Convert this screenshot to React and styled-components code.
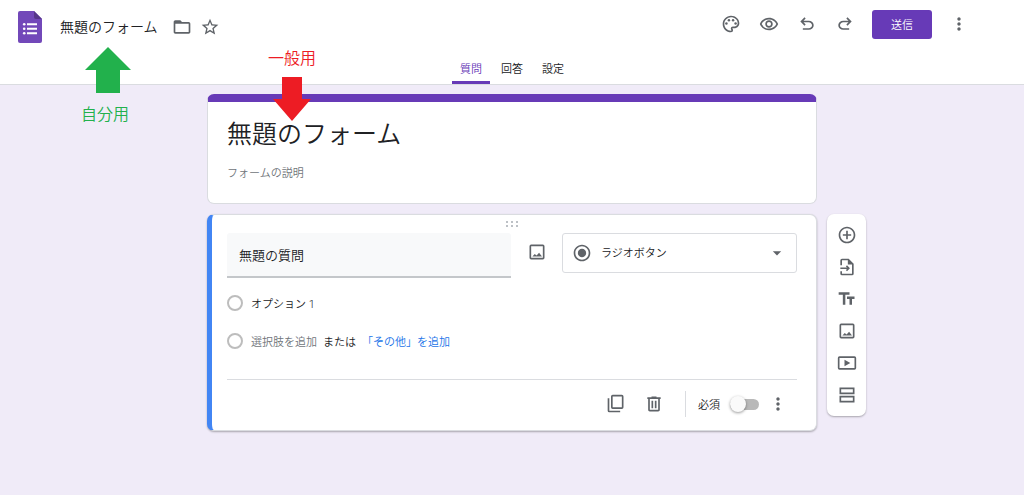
import React, { useState } from 'react'
import styled, { createGlobalStyle } from 'styled-components'
import {
    MdOutlinePalette, MdOutlineRemoveRedEye, MdMoreVert, MdFolderOpen,
    MdStarBorder, MdRadioButtonChecked, MdArrowDropDown,
    MdAddCircleOutline
} from 'react-icons/md'


// Symbol: Material symbols that the icon package does not have
const Symbol = ({ d, ...rest }) => (
    <svg viewBox='0 0 24 24' width='20' height='20' fill='currentColor' aria-hidden='true' {...rest}>
        <path fillRule='evenodd' d={d} />
    </svg>
)

const paths = {
    undo: 'M7 19v-2h7.1c1.05 0 1.96-.33 2.74-1 .77-.67 1.16-1.5 1.16-2.5s-.39-1.83-1.16-2.5c-.78-.67-1.69-1-2.74-1H7.8l2.6 2.6L9 14 4 9l5-5 1.4 1.4L7.8 8h6.3c1.62 0 3 .53 4.16 1.58C19.42 10.63 20 11.93 20 13.5s-.58 2.87-1.74 3.93C17.1 18.48 15.72 19 14.1 19H7z',
    redo: 'M17 19v-2H9.9c-1.05 0-1.96-.33-2.74-1C6.39 15.33 6 14.5 6 13.5s.39-1.83 1.16-2.5c.78-.67 1.69-1 2.74-1h6.3l-2.6 2.6L15 14l5-5-5-5-1.4 1.4L16.2 8H9.9c-1.62 0-3 .53-4.16 1.58C4.58 10.63 4 11.93 4 13.5s.58 2.87 1.74 3.93C6.9 18.48 8.28 19 9.9 19H17z',
    image: 'M5 3h14a2 2 0 0 1 2 2v14a2 2 0 0 1-2 2H5a2 2 0 0 1-2-2V5a2 2 0 0 1 2-2zm0 2v14h14V5H5zm1.500 12.500 2.800-3.200 2.200 1.900 3-3.400 3.500 4.700z',
    copy: 'M8 1h11a2 2 0 0 1 2 2v13a2 2 0 0 1-2 2H8a2 2 0 0 1-2-2V3a2 2 0 0 1 2-2zm0 2v13h11V3H8zM2 5h2v15h13v2H4a2 2 0 0 1-2-2V5z',
    trash: 'M15 4V3H9v1H4v2h1v13c0 1.100.9 2 2 2h10c1.100 0 2-.9 2-2V6h1V4h-5zm2 15H7V6h10v13zM9 8h2v9H9V8zm4 0h2v9h-2V8z',
    importFile: 'M14 2H6a2 2 0 0 0-2 2v6h2V4h7v5h5v11H6v-3H4v3a2 2 0 0 0 2 2h12a2 2 0 0 0 2-2V8l-6-6zM12 10l3.500 3.500L12 17l-1.300-1.300 1.300-1.300H4v-1.800h8l-1.300-1.300L12 10z',
    text: 'M2 4v3h5v12h3V7h5V4H2zm19 5h-9v3h3v7h3v-7h3V9z',
    video: 'M3 4h18a2 2 0 0 1 2 2v12a2 2 0 0 1-2 2H3a2 2 0 0 1-2-2V6a2 2 0 0 1 2-2zm0 2v12h18V6H3zm6 2 7 4-7 4V8z',
    section: 'M3 3h18v8H3V3zm2 2v4h14V5H5zM3 13h18v8H3v-8zm2 2v4h14v-4H5z',
}

const tools = [
    { label: '質問を追加', icon: <MdAddCircleOutline /> },
    { label: '質問をインポート', icon: <Symbol d={paths.importFile} /> },
    { label: 'タイトルと説明を追加', icon: <Symbol d={paths.text} /> },
    { label: '画像を追加', icon: <Symbol d={paths.image} /> },
    { label: '動画を追加', icon: <Symbol d={paths.video} /> },
    { label: 'セクションを追加', icon: <Symbol d={paths.section} /> },
]

const Logo = () => (
    <svg viewBox='0 0 24 32' width='24' height='32' aria-hidden='true'>
        <path fill='#7248b9' d='M2 0h14l8 8v22a2 2 0 0 1-2 2H2a2 2 0 0 1-2-2V2a2 2 0 0 1 2-2z' />
        <path fill='#563689' d='M16 0l8 8h-6a2 2 0 0 1-2-2z' />
        <path fill='#fff' d='M9 12.300h10v2H9zm0 4.500h10v2H9zm0 4.500h10v2H9z' />
        <circle fill='#fff' cx='6.200' cy='13.300' r='1.300' />
        <circle fill='#fff' cx='6.200' cy='17.800' r='1.300' />
        <circle fill='#fff' cx='6.200' cy='22.300' r='1.300' />
    </svg>
)

// Header: file name, actions and tabs
const Header = () => {
    const [tab, setTab] = useState('質問')
    return (
        <TopBar>
            <TopRow>
                <FileInfo>
                    <Logo />
                    <FileName aria-label='ファイル名' defaultValue='無題のフォーム' />
                    <SmallButton aria-label='フォルダに移動'><MdFolderOpen /></SmallButton>
                    <SmallButton aria-label='スターを付ける'><MdStarBorder /></SmallButton>
                </FileInfo>
                <Actions>
                    <IconButton aria-label='テーマ'><MdOutlinePalette /></IconButton>
                    <IconButton aria-label='プレビュー'><MdOutlineRemoveRedEye /></IconButton>
                    <IconButton aria-label='元に戻す'><Symbol d={paths.undo} /></IconButton>
                    <IconButton aria-label='やり直す'><Symbol d={paths.redo} /></IconButton>
                    <SendButton>送信</SendButton>
                    <IconButton aria-label='その他'><MdMoreVert /></IconButton>
                </Actions>
            </TopRow>
            <Tabs>
                {['質問', '回答', '設定'].map(name => (
                    <Tab key={name} $active={name === tab} onClick={() => setTab(name)}>{name}</Tab>
                ))}
            </Tabs>
            <FileNote>
                <svg viewBox='0 0 50 46' width='50' height='46' aria-hidden='true'>
                    <path fill='#22b14c' d='M27 0l23 23H39v23H15V23H4z' />
                </svg>
                自分用
            </FileNote>
        </TopBar>
    )
}

// QuestionCard: the question that is being edited
const QuestionCard = () => (
    <Question>
        <DragDots viewBox='0 0 12 6' width='12' height='6' aria-hidden='true'>
            <path d='M0 0h2v2H0zm5 0h2v2H5zm5 0h2v2h-2zM0 4h2v2H0zm5 0h2v2H5zm5 0h2v2h-2z' />
        </DragDots>
        <QuestionHead>
            <QuestionInput aria-label='質問' defaultValue='無題の質問' />
            <IconButton aria-label='画像を追加'><Symbol d={paths.image} /></IconButton>
            <TypeBox>
                <MdRadioButtonChecked />
                <TypeSelect aria-label='質問の形式'>
                    <option>ラジオボタン</option>
                </TypeSelect>
                <MdArrowDropDown />
            </TypeBox>
        </QuestionHead>
        <Option>
            <Radio type='radio' name='answer' aria-label='オプション 1' />
            <OptionInput aria-label='選択肢' defaultValue='オプション 1' />
        </Option>
        <Option>
            <Radio type='radio' name='answer' aria-label='選択肢を追加' />
            <TextButton $color='#70757a'>選択肢を追加</TextButton>
            <Or>または</Or>
            <TextButton $color='#1a73e8'>「その他」を追加</TextButton>
        </Option>
        <QuestionFoot>
            <IconButton aria-label='コピーを作成'><Symbol d={paths.copy} /></IconButton>
            <IconButton aria-label='削除'><Symbol d={paths.trash} /></IconButton>
            <Divider />
            <Required htmlFor='required'>必須</Required>
            <Switch id='required' type='checkbox' />
            <IconButton aria-label='オプション'><MdMoreVert /></IconButton>
        </QuestionFoot>
    </Question>
)

const App = () => (
    <>
        <GlobalStyle />
        <Header />
        <Main>
            <Column>
                <TitleCard>
                    <FormTitle aria-label='フォームのタイトル' defaultValue='無題のフォーム' />
                    <FormDescription aria-label='フォームの説明' placeholder='フォームの説明' />
                    <TitleNote>
                        一般用
                        <svg viewBox='0 0 38 44' width='38' height='44' aria-hidden='true'>
                            <path fill='#ed1c24' d='M9 0h20v22h9L19 44 0 22h9z' />
                        </svg>
                    </TitleNote>
                </TitleCard>
                <QuestionCard />
            </Column>
            <Toolbar>
                {tools.map(tool => (
                    <ToolButton key={tool.label} aria-label={tool.label}>{tool.icon}</ToolButton>
                ))}
            </Toolbar>
        </Main>
    </>
)

const GlobalStyle = createGlobalStyle`
    * {
        box-sizing: border-box;
    }
    body {
        margin: 0;
        background: #f0ebf8;
        color: #202124;
        font-family: Roboto, "Noto Sans CJK JP", sans-serif;
        font-size: 11px;
        font-weight: 350;
    }
    button, input, select {
        margin: 0;
        padding: 0;
        border: 0;
        background: none;
        color: inherit;
        font: inherit;
    }
    button {
        cursor: pointer;
    }
    input {
        min-width: 0;
        outline: none;
    }
`

const TopBar = styled('header')`
    position: relative;
    background: #fff;
    border-bottom: 1px solid #dadce0;
`
const TopRow = styled('div')`
    display: flex;
    justify-content: space-between;
    align-items: flex-start;
    padding: 5px 46px 0 18px;
`
const FileInfo = styled('div')`
    display: flex;
    align-items: center;
    padding-top: 6px;
`
const FileName = styled('input')`
    width: 104px;
    margin: 0 4px 0 18px;
    font-size: 14px;
    line-height: 24px;
`
const Actions = styled('div')`
    display: flex;
    align-items: center;
`
const IconButton = styled('button')`
    display: flex;
    flex: none;
    align-items: center;
    justify-content: center;
    width: 38px;
    height: 38px;
    color: #5f6368;
    svg {
        width: 20px;
        height: 20px;
    }
`
const SmallButton = styled(IconButton)`
    width: 28px;
    height: 28px;
`
const SendButton = styled('button')`
    width: 60px;
    height: 29px;
    margin: 0 8px;
    border-radius: 3px;
    background: #673ab7;
    color: #fff;
`
const Tabs = styled('nav')`
    display: flex;
    justify-content: center;
    gap: 3px;
    margin-top: 12px;
`
const Tab = styled('button')`
    height: 29px;
    padding: 0 8px;
    border-bottom: 3px solid ${props => props.$active ? '#673ab7' : 'transparent'};
    border-radius: 2px 2px 0 0;
    color: ${props => props.$active ? '#673ab7' : '#202124'};
`

// Note: coloured annotation with an arrow, drawn over the page
const Note = styled('div')`
    position: absolute;
    z-index: 1;
    display: flex;
    flex-direction: column;
    align-items: center;
    font-size: 16px;
    line-height: 24px;
    pointer-events: none;
`
const FileNote = styled(Note)`
    top: 47px;
    left: 81px;
    gap: 10px;
    align-items: flex-start;
    color: #22b14c;
`
const TitleNote = styled(Note)`
    top: -55px;
    left: 60px;
    gap: 6px;
    color: #ed1c24;
`

const Main = styled('main')`
    display: grid;
    grid-template-columns: 1fr minmax(0, 610px) 1fr;
    gap: 10px;
    padding: 9px 0 24px;
`
const Column = styled('div')`
    display: flex;
    grid-column: 2;
    flex-direction: column;
    gap: 10px;
`
const Card = styled('section')`
    position: relative;
    border: 1px solid #dadce0;
    border-radius: 7px;
    background: #fff;
`
const TitleCard = styled(Card)`
    display: flex;
    flex-direction: column;
    padding: 13px 19px 20px;
    border-top: 8px solid #673ab7;
`
const FormTitle = styled('input')`
    width: 100%;
    height: 40px;
    font-size: 25px;
    line-height: 40px;
`
const FormDescription = styled('input')`
    width: 100%;
    height: 20px;
    margin-top: 8px;
    &::placeholder {
        color: #70757a;
        opacity: 1;
    }
`
const Question = styled(Card)`
    display: flex;
    flex-direction: column;
    padding: 6px 19px 7px 15px;
    border-left: 5px solid #4285f4;
    box-shadow: 0 1px 2px rgba(0, 0, 0, 0.3);
`
const DragDots = styled('svg')`
    align-self: center;
    fill: #bdc1c6;
`
const QuestionHead = styled('div')`
    display: flex;
    align-items: flex-start;
    margin: 6px 0;
`
const QuestionInput = styled('input')`
    flex: 1;
    height: 45px;
    padding: 0 12px;
    border-bottom: 2px solid #c4c7ca;
    border-radius: 3px 3px 0 0;
    background: #f8f9fa;
    font-size: 13px;
    & + button {
        margin: 0 6px 0 7px;
    }
`
const TypeBox = styled('div')`
    display: flex;
    align-items: center;
    width: 235px;
    height: 40px;
    padding: 0 9px;
    border: 1px solid #dadce0;
    border-radius: 3px;
    color: #5f6368;
    svg {
        flex: none;
        width: 20px;
        height: 20px;
    }
`
const TypeSelect = styled('select')`
    flex: 1;
    height: 100%;
    padding-left: 9px;
    appearance: none;
    color: #202124;
`
const Option = styled('div')`
    display: flex;
    align-items: center;
    height: 38px;
`
const Radio = styled('input')`
    width: 16px;
    height: 16px;
    margin-right: 8px;
    border: 2px solid #bdbdbd;
    border-radius: 50%;
    appearance: none;
`
const OptionInput = styled('input')`
    flex: 1;
    height: 24px;
`
const TextButton = styled('button')`
    color: ${props => props.$color};
`
const Or = styled('span')`
    margin: 0 6px;
`
const QuestionFoot = styled('div')`
    display: flex;
    align-items: center;
    justify-content: flex-end;
    margin-top: 19px;
    padding-top: 5px;
    border-top: 1px solid #dadce0;
`
const Divider = styled('span')`
    width: 1px;
    height: 26px;
    margin: 0 12px;
    background: #dadce0;
`
const Required = styled('label')`
    margin-right: 10px;
`
const Switch = styled('input')`
    display: flex;
    align-items: center;
    width: 29px;
    height: 11px;
    border-radius: 6px;
    appearance: none;
    background: #b9b9b9;
    &::before {
        content: '';
        width: 16px;
        height: 16px;
        flex: none;
        border-radius: 50%;
        background: #fafafa;
        box-shadow: 0 1px 3px rgba(0, 0, 0, 0.4);
    }
    &:checked {
        justify-content: flex-end;
        background: #673ab7;
    }
`
const Toolbar = styled('aside')`
    display: flex;
    flex-direction: column;
    align-self: start;
    justify-self: start;
    margin-top: 120px;
    padding: 5px 0;
    border-radius: 7px;
    background: #fff;
    box-shadow: 0 1px 2px rgba(0, 0, 0, 0.3);
`
const ToolButton = styled(IconButton)`
    width: 39px;
    height: 32px;
`

export default App
